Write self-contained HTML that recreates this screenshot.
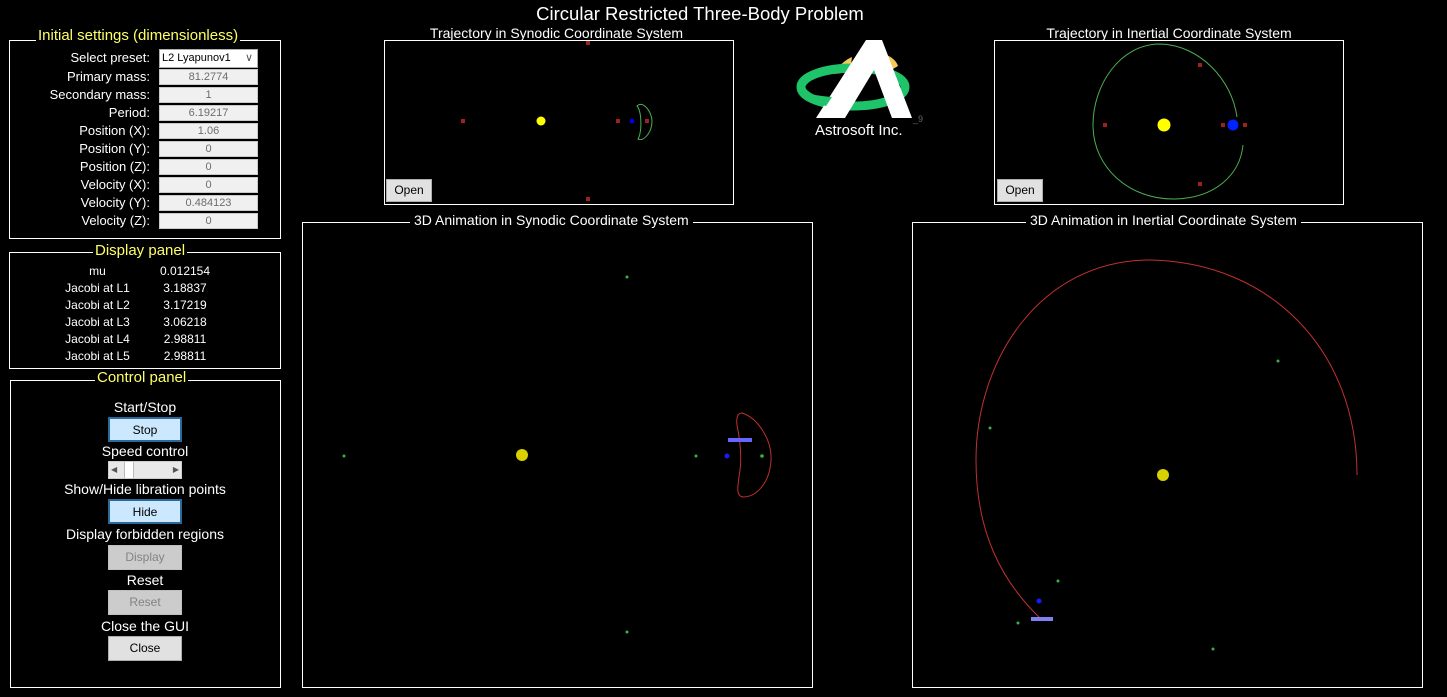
<!DOCTYPE html>
<html><head><meta charset="utf-8"><style>
body{margin:0;width:1447px;height:697px;background:#000;position:relative;overflow:hidden;font-family:"Liberation Sans",Arial,sans-serif;color:#fff}
.a{position:absolute}
.box{position:absolute;border:1px solid #fff;box-sizing:border-box}
.ttl{position:absolute;background:#000;padding:0 2px;white-space:nowrap;line-height:16px}
.y{color:#ffff66;font-size:15px}
.lbl{position:absolute;width:150px;text-align:right;font-size:13px;line-height:16px;left:0}
.inp{position:absolute;left:159px;width:99px;height:16px;box-sizing:border-box;background:#f0f0f0;border:1px solid #c8c8c8;color:#6d6d6d;font-size:11px;text-align:center;line-height:14px}
.dl{position:absolute;left:40px;width:115px;text-align:center;font-size:12px;line-height:14px}
.dv{position:absolute;left:150px;width:70px;text-align:center;font-size:12px;line-height:14px}
.ct{position:absolute;left:10px;width:270px;text-align:center;font-size:14px;line-height:16px}
.btn{position:absolute;left:108px;width:74px;height:25px;box-sizing:border-box;text-align:center;font-size:12px;line-height:23px;color:#000}
.on{background:#cce8ff;border:2px solid #2a6a9a}
.dis{background:#cccccc;border:1px solid #bfbfbf;color:#838383}
.nrm{background:#e1e1e1;border:1px solid #adadad}
.open{position:absolute;width:46px;height:23px;box-sizing:border-box;background:#e1e1e1;border:1px solid #adadad;color:#000;font-size:12px;line-height:21px;text-align:center}
</style></head><body>
<div class="a" style="left:0;width:1400px;top:3px;text-align:center;font-size:18.5px">Circular Restricted Three-Body Problem</div>

<!-- Initial settings -->
<div class="box" style="left:9px;top:40px;width:272px;height:199px"></div>
<div class="ttl y" style="left:36px;top:28px">Initial settings (dimensionless)</div>
<div class="lbl" style="top:50px">Select preset:</div>
<div class="a" style="left:159px;top:49px;width:99px;height:19px;background:#fff;border:1px solid #adadad;box-sizing:border-box;color:#000;font-size:11px;line-height:17px;padding-left:2px">L2 Lyapunov1<span style="position:absolute;right:4px;color:#555">&#8744;</span></div>
<div class="lbl" style="top:69px">Primary mass:</div><div class="inp" style="top:69px">81.2774</div>
<div class="lbl" style="top:87px">Secondary mass:</div><div class="inp" style="top:87px">1</div>
<div class="lbl" style="top:105px">Period:</div><div class="inp" style="top:105px">6.19217</div>
<div class="lbl" style="top:123px">Position (X):</div><div class="inp" style="top:123px">1.06</div>
<div class="lbl" style="top:141px">Position (Y):</div><div class="inp" style="top:141px">0</div>
<div class="lbl" style="top:159px">Position (Z):</div><div class="inp" style="top:159px">0</div>
<div class="lbl" style="top:177px">Velocity (X):</div><div class="inp" style="top:177px">0</div>
<div class="lbl" style="top:195px">Velocity (Y):</div><div class="inp" style="top:195px">0.484123</div>
<div class="lbl" style="top:213px">Velocity (Z):</div><div class="inp" style="top:213px">0</div>

<!-- Display panel -->
<div class="box" style="left:9px;top:252px;width:272px;height:117px"></div>
<div class="ttl y" style="left:93px;top:243px">Display panel</div>
<div class="dl" style="top:264px">mu</div><div class="dv" style="top:264px">0.012154</div>
<div class="dl" style="top:281px">Jacobi at L1</div><div class="dv" style="top:281px">3.18837</div>
<div class="dl" style="top:298px">Jacobi at L2</div><div class="dv" style="top:298px">3.17219</div>
<div class="dl" style="top:315px">Jacobi at L3</div><div class="dv" style="top:315px">3.06218</div>
<div class="dl" style="top:332px">Jacobi at L4</div><div class="dv" style="top:332px">2.98811</div>
<div class="dl" style="top:349px">Jacobi at L5</div><div class="dv" style="top:349px">2.98811</div>

<!-- Control panel -->
<div class="box" style="left:10px;top:380px;width:271px;height:308px"></div>
<div class="ttl y" style="left:95px;top:370px">Control panel</div>
<div class="ct" style="top:399px">Start/Stop</div>
<div class="btn on" style="top:417px">Stop</div>
<div class="ct" style="top:443px">Speed control</div>
<div class="a" style="left:108px;top:461px;width:74px;height:18px;background:#e8e8e8;border:1px solid #ccc;box-sizing:border-box">
<div class="a" style="left:2px;top:3px;font-size:8px;color:#555">&#9664;</div>
<div class="a" style="left:15px;top:0;width:8px;height:16px;background:#fff;border-left:1px solid #bbb;border-right:1px solid #bbb"></div>
<div class="a" style="right:2px;top:3px;font-size:8px;color:#555">&#9654;</div></div>
<div class="ct" style="top:481px">Show/Hide libration points</div>
<div class="btn on" style="top:499px">Hide</div>
<div class="ct" style="top:526px">Display forbidden regions</div>
<div class="btn dis" style="top:545px">Display</div>
<div class="ct" style="top:572px">Reset</div>
<div class="btn dis" style="top:590px">Reset</div>
<div class="ct" style="top:618px">Close the GUI</div>
<div class="btn nrm" style="top:636px">Close</div>

<!-- small plots -->
<div class="box" style="left:384px;top:40px;width:350px;height:165px"></div>
<div class="a" style="left:384px;width:345px;top:25px;text-align:center;font-size:14px">Trajectory in Synodic Coordinate System</div>
<div class="box" style="left:994px;top:40px;width:350px;height:165px"></div>
<div class="a" style="left:994px;width:350px;top:25px;text-align:center;font-size:14px">Trajectory in Inertial Coordinate System</div>
<div class="open" style="left:386px;top:179px">Open</div>
<div class="open" style="left:997px;top:179px">Open</div>

<!-- 3D boxes -->
<div class="box" style="left:302px;top:222px;width:511px;height:466px"></div>
<div class="ttl" style="left:410px;top:212px;font-size:14px;padding:0 4px">3D Animation in Synodic Coordinate System</div>
<div class="box" style="left:912px;top:222px;width:511px;height:466px"></div>
<div class="ttl" style="left:1026px;top:212px;font-size:14px;padding:0 4px">3D Animation in Inertial Coordinate System</div>

<svg class="a" style="left:0;top:0" width="1447" height="697">
<!-- synodic small -->
<g fill="#a02020"><rect x="461" y="119" width="4" height="4"/><rect x="586" y="41" width="4" height="4"/><rect x="586" y="197" width="4" height="4"/><rect x="616" y="119" width="4" height="4"/><rect x="645" y="119" width="4" height="4"/></g>
<circle cx="541" cy="121" r="4.5" fill="#ffff00"/>
<circle cx="632" cy="121" r="2.5" fill="#0000dd"/>
<path d="M637,106 C643,100 652,112 652,121 C652,132 644,142 638,139 C642,132 642,112 637,106Z" fill="none" stroke="#4caf50" stroke-width="1"/>
<!-- inertial small -->
<g fill="#a02020"><rect x="1103" y="123" width="4" height="4"/><rect x="1198" y="63" width="4" height="4"/><rect x="1198" y="182" width="4" height="4"/><rect x="1221" y="123" width="4" height="4"/><rect x="1243" y="123" width="4" height="4"/></g>
<circle cx="1164" cy="125" r="6.5" fill="#ffff00"/>
<circle cx="1233" cy="125" r="5.5" fill="#0022ff"/>
<path d="M1237,117 C1232,80 1200,45 1160,44 C1120,44 1093,85 1093,125 C1093,168 1130,200 1175,199 C1215,198 1240,175 1243,145" fill="none" stroke="#4caf50" stroke-width="1"/>
<!-- 3D synodic -->
<g fill="#3cb043"><circle cx="627" cy="277" r="1.5"/><circle cx="344" cy="456" r="1.5"/><circle cx="696" cy="456" r="1.5"/><circle cx="762" cy="456" r="1.8"/><circle cx="627" cy="632" r="1.5"/></g>
<circle cx="522" cy="455" r="6" fill="#d8d000"/>
<circle cx="727" cy="456" r="2.5" fill="#1a1aff"/>
<path d="M742,413 C758,418 772,440 771,460 C770,482 757,497 743,497 C735,496 738,485 740,470 C742,455 740,440 737,425 C736,417 738,413 742,413Z" fill="none" stroke="#c03030" stroke-width="1"/>
<rect x="728" y="438" width="24" height="4" fill="#6666ff"/>
<!-- 3D inertial -->
<g fill="#3cb043"><circle cx="1278" cy="361" r="1.5"/><circle cx="990" cy="428" r="1.5"/><circle cx="1058" cy="581" r="1.5"/><circle cx="1018" cy="623" r="1.5"/><circle cx="1213" cy="649" r="1.5"/></g>
<circle cx="1163" cy="475" r="6" fill="#d8d000"/>
<circle cx="1039" cy="601" r="2.5" fill="#1a1aff"/>
<path d="M1357,475 C1357,350 1270,262 1150,260 C1040,260 976,360 976,460 C976,530 1000,580 1041,619" fill="none" stroke="#c03030" stroke-width="1"/>
<rect x="1031" y="617" width="22" height="4" fill="#8080ee"/>
<!-- logo -->
<path d="M834,74 C838,66 845,60 852,57 L850,72Z" fill="#f5c85a"/>
<path d="M884,54 C890,56 896,60 898,66 L888,72Z" fill="#f5c85a"/>
<ellipse cx="853" cy="87" rx="52" ry="19" fill="none" stroke="#1ec36a" stroke-width="9"/>
<path d="M816,118 L866,40 L882,40 L912,118 L892,118 L874,70 L845,118Z" fill="#fff"/>
<path d="M800,92 C806,100 816,104 826,106 L832,97 C820,96 808,94 800,92Z" fill="#1ec36a"/>
</svg>
<div class="a" style="left:815px;top:122px;font-size:15px">Astrosoft Inc.</div>
<div class="a" style="left:913px;top:114px;font-size:9px;color:#666">_9</div>
</body></html>
